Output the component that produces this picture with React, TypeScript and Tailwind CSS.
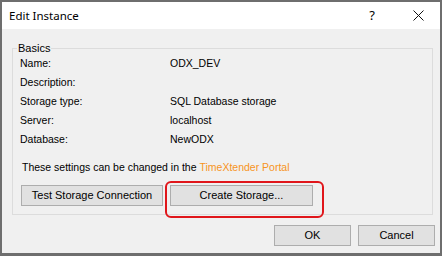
import React from 'react';

const rows: [string, string][] = [
  ['Name:', 'ODX_DEV'],
  ['Description:', ''],
  ['Storage type:', 'SQL Database storage'],
  ['Server:', 'localhost'],
  ['Database:', 'NewODX'],
];

const btn =
  'h-[21px] border border-[#adadad] bg-[#e1e1e1] text-[11px] leading-[19px] text-black flex items-center justify-center';

const App: React.FC = () => {
  return (
    <div
      className="w-[442px] h-[256px] bg-[#6e6e6e] pt-[2px] pl-[2px] pr-[2px] pb-[3px] flex flex-col"
      style={{ fontFamily: '"Liberation Sans", Arial, sans-serif' }}
    >
      {/* title bar */}
      <div className="h-[27px] bg-white flex items-center pl-[7px] pr-[14px] shrink-0">
        <span className="text-[11.5px] text-black" style={{ fontFamily: '"Noto Sans", sans-serif' }}>
          Edit Instance
        </span>
        <span className="ml-auto mr-[38px] text-[13px] text-black" style={{ fontFamily: '"Noto Sans", sans-serif' }}>
          ?
        </span>
        <svg width="11" height="11" viewBox="0 0 11 11" className="mr-[2px]">
          <path d="M0.5 0.5 L10.5 10.5 M10.5 0.5 L0.5 10.5" stroke="#111" strokeWidth="1" fill="none" />
        </svg>
      </div>

      {/* body */}
      <div className="flex-1 bg-[#f0f0f0] flex flex-col pl-[10px] pr-[5px]">
        <div className="relative mt-[19px] w-[421px] h-[167px] border border-[#dcdcdc] pl-[7px] pt-[5px]">
          <span className="absolute left-[4px] top-[-9px] px-[1px] bg-[#f0f0f0] text-[11px] leading-[16px] text-black">
            Basics
          </span>
          {rows.map(([label, value]) => (
            <div key={label} className="flex h-[19px] items-center text-[10.5px] text-black">
              <span className="w-[150px]">{label}</span>
              <span>{value}</span>
            </div>
          ))}
          <div className="mt-[9px] h-[19px] flex items-center pl-[2px] text-[10.5px] text-black">
            These settings can be changed in the&nbsp;
            <span className="text-[#f7941d]">TimeXtender Portal</span>
          </div>
          <div className="mt-[8px] flex gap-[7px] pl-[1px]">
            <div className={`${btn} w-[142px]`}>Test Storage Connection</div>
            <div className="relative">
              <div className={`${btn} w-[143px]`}>Create Storage...</div>
              <div className="absolute left-[-5px] top-[-4px] w-[159px] h-[37px] border-2 border-[#e0161b] rounded-[6px]" />
            </div>
          </div>
        </div>
        <div className="mt-[10px] flex justify-end gap-[7px]">
          <div className={`${btn} w-[77px]`}>OK</div>
          <div className={`${btn} w-[77px]`}>Cancel</div>
        </div>
      </div>
    </div>
  );
};

export default App;
